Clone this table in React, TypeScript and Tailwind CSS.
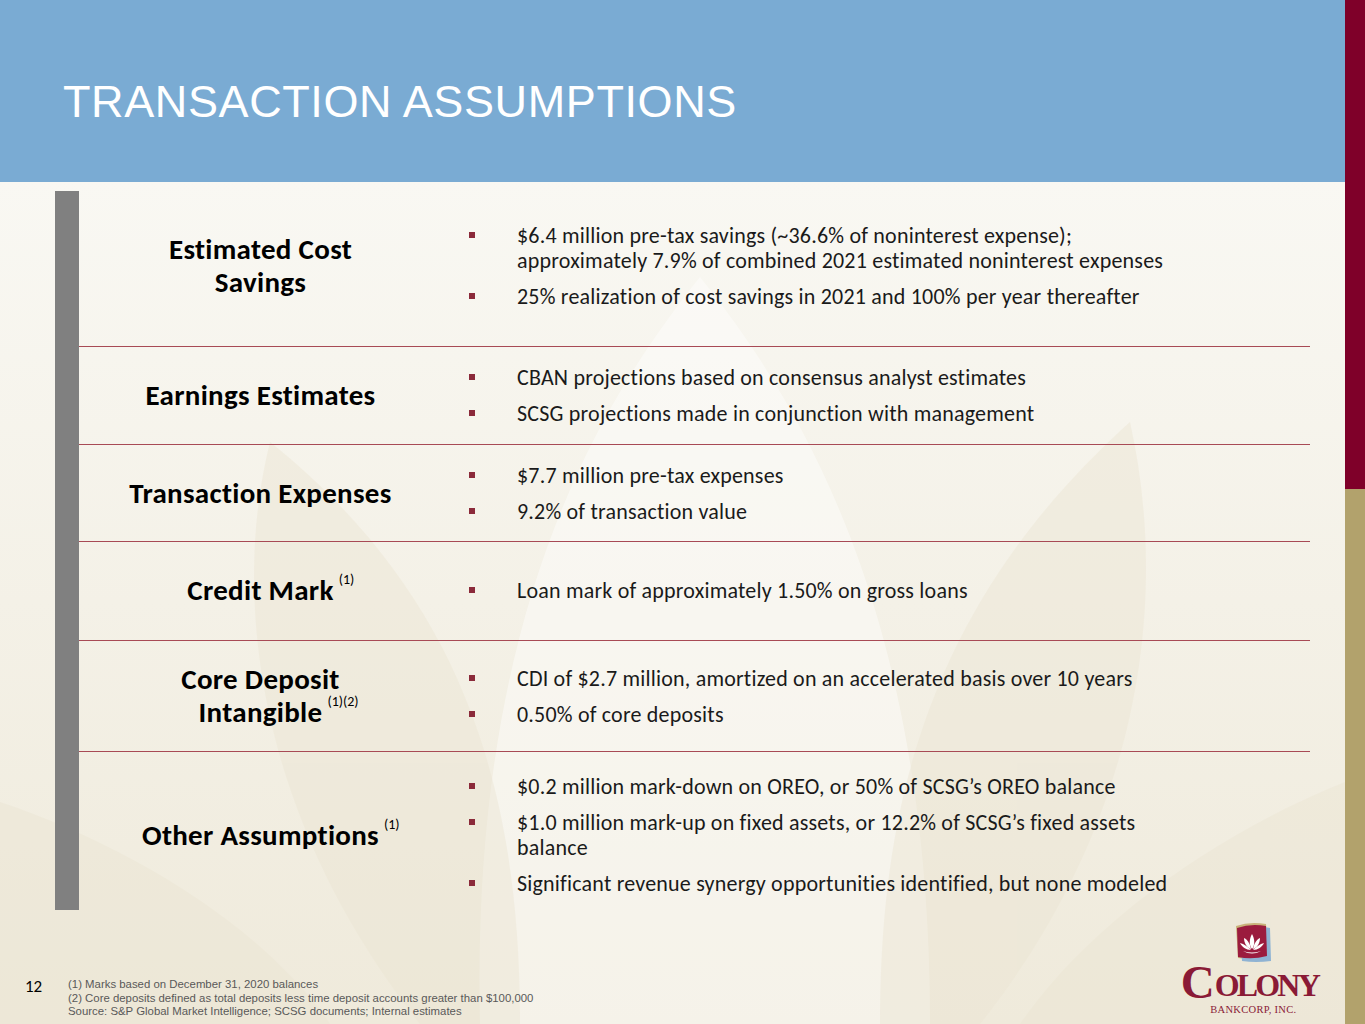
import React from "react";

const body = "font-['Carlito','Lato','Noto_Sans',sans-serif]";

type Row = {
  label: React.ReactNode;
  items: React.ReactNode[];
  h: string;
  pad?: string;
};

function Sup({ text }: { text: string }) {
  return (
    <span className="absolute left-full top-[-9px] ml-[5px] whitespace-nowrap text-[14px] font-normal tracking-normal">
      {text}
    </span>
  );
}

const rows: Row[] = [
  {
    label: (
      <>
        Estimated Cost
        <br />
        Savings
      </>
    ),
    items: [
      <>
        $6.4 million pre-tax savings (~36.6% of noninterest expense);
        <br />
        approximately 7.9% of combined 2021 estimated noninterest expenses
      </>,
      "25% realization of cost savings in 2021 and 100% per year thereafter",
    ],
    h: "h-[156px]",
    pad: "pb-[6px]",
  },
  {
    label: "Earnings Estimates",
    items: [
      "CBAN projections based on consensus analyst estimates",
      "SCSG projections made in conjunction with management",
    ],
    h: "h-[98px]",
  },
  {
    label: "Transaction Expenses",
    items: ["$7.7 million pre-tax expenses", "9.2% of transaction value"],
    h: "h-[97px]",
  },
  {
    label: (
      <span className="relative">
        Credit Mark
        <Sup text="(1)" />
      </span>
    ),
    items: ["Loan mark of approximately 1.50% on gross loans"],
    h: "h-[99px]",
    pad: "pb-[2px]",
  },
  {
    label: (
      <>
        Core Deposit
        <br />
        <span className="relative">
          Intangible
          <Sup text="(1)(2)" />
        </span>
      </>
    ),
    items: [
      "CDI of $2.7 million, amortized on an accelerated basis over 10 years",
      "0.50% of core deposits",
    ],
    h: "h-[111px]",
  },
  {
    label: (
      <span className="relative">
        Other Assumptions
        <Sup text="(1)" />
      </span>
    ),
    items: [
      "$0.2 million mark-down on OREO, or 50% of SCSG’s OREO balance",
      <>
        $1.0 million mark-up on fixed assets, or 12.2% of SCSG’s fixed assets
        <br />
        balance
      </>,
      "Significant revenue synergy opportunities identified, but none modeled",
    ],
    h: "h-[158px]",
    pad: "pt-[8px]",
  },
];

function Watermark() {
  return (
    <svg
      className="absolute inset-0 h-full w-full"
      viewBox="0 0 1345 842"
      preserveAspectRatio="none"
    >
      <g fill="#ffffff" opacity="0.4">
        <path d="M700 95 C 600 220, 470 430, 480 842 L 930 842 C 930 430, 800 220, 700 95 Z" />
      </g>
      <g fill="#ebe5d3" opacity="0.45">
        <path d="M270 260 C 230 420, 260 640, 420 842 L 520 842 C 520 620, 470 420, 270 260 Z" />
        <path d="M1130 240 C 1170 420, 1140 640, 980 842 L 880 842 C 880 620, 930 420, 1130 240 Z" />
        <path d="M0 620 C 120 660, 260 740, 330 842 L 0 842 Z" />
        <path d="M1345 600 C 1220 650, 1090 740, 1020 842 L 1345 842 Z" />
      </g>
    </svg>
  );
}

function Logo() {
  return (
    <div className="flex flex-col items-center">
      <svg width="40" height="40" viewBox="0 0 40 40" className="ml-[6px]">
        <path d="M4 4 Q 18 -1 34 2 L 36 34 Q 20 38 6 36 Z" fill="#c9b27a" />
        <path d="M8 7 Q 22 2 38 6 L 39 39 Q 24 41 10 39 Z" fill="#8fb3d3" />
        <path d="M5 6 Q 19 1 34 4 L 35 34 Q 20 38 6 35 Z" fill="#9b1b3e" />
        <g fill="#ffffff">
          <path d="M20 12 C 17 17, 17 23, 20 27 C 23 23, 23 17, 20 12 Z" />
          <path d="M12 16 C 12 21, 15 26, 19 27 C 18 22, 16 18, 12 16 Z" />
          <path d="M28 16 C 28 21, 25 26, 21 27 C 22 22, 24 18, 28 16 Z" />
          <path d="M8 21 C 10 25, 14 28, 19 28 C 16 25, 12 22, 8 21 Z" />
          <path d="M32 21 C 30 25, 26 28, 21 28 C 24 25, 28 22, 32 21 Z" />
          <path d="M11 29 Q 20 32 29 29 Q 20 34 11 29 Z" />
        </g>
      </svg>
      <div className="mt-[2px] flex items-end font-['Liberation_Serif',serif] font-bold text-[#8a1a36]">
        <span className="text-[47px] leading-[36px]">C</span>
        <span className="text-[32px] leading-[29px] tracking-[-2.8px]">OLONY</span>
      </div>
      <div className="ml-[8px] mt-[5px] font-['Liberation_Serif',serif] text-[10.5px] leading-none tracking-[0.3px] text-[#8a1a36]">
        BANKCORP, INC.
      </div>
    </div>
  );
}

export default function App() {
  return (
    <div className="flex h-[1024px] w-[1365px] overflow-hidden">
      <div className="flex w-[1345px] flex-col">
        {/* HEADER */}
        <div className="h-[182px] shrink-0 bg-[#7aabd3] pl-[63px] pt-[79px]">
          <h1 className="font-['Liberation_Sans',Arial,sans-serif] text-[45px] leading-[45px] tracking-[0.6px] text-white">
            TRANSACTION ASSUMPTIONS
          </h1>
        </div>

        {/* BODY */}
        <div className="relative flex-1 bg-gradient-to-b from-[#f9f8f3] to-[#efeadb]">
          <Watermark />

          <div className="relative flex pl-[55px] pt-[9px]">
            <div className="h-[719px] w-[24px] bg-[#808080]" />

            <div className={`w-[1231px] ${body}`}>
              {rows.map((row, i) => (
                <div
                  key={i}
                  className={`flex items-center ${row.h} ${row.pad ?? ""} ${
                    i < rows.length - 1 ? "border-b-[1.5px] border-[#a84a55]" : ""
                  }`}
                >
                  <div className="w-[363px] text-center text-[29px] font-bold leading-[33px] tracking-[0.3px] text-black">
                    {row.label}
                  </div>
                  <ul className="flex flex-col gap-[11px] text-[22px] leading-[25px] tracking-[0.2px] text-[#1a1a1a]">
                    {row.items.map((item, j) => (
                      <li key={j} className="flex">
                        <span className="ml-[27px] mt-[9px] h-[6px] w-[6px] shrink-0 bg-[#8b2a3a]" />
                        <span className="ml-[42px]">{item}</span>
                      </li>
                    ))}
                  </ul>
                </div>
              ))}
            </div>
          </div>

          {/* FOOTER */}
          <div className="relative mt-[12px] flex items-start justify-between pr-[27px]">
            <div className="flex items-start pl-[25px] pt-[56px]">
              <div className={`${body} w-[43px] text-[17px] leading-[17px] text-black`}>12</div>
              <div className="font-['Liberation_Sans',Arial,sans-serif] text-[11.4px] leading-[13.5px] text-[#595959]">
                <div>(1) Marks based on December 31, 2020 balances</div>
                <div>(2) Core deposits defined as total deposits less time deposit accounts greater than $100,000</div>
                <div>Source: S&amp;P Global Market Intelligence; SCSG documents; Internal estimates</div>
              </div>
            </div>
            <Logo />
          </div>
        </div>
      </div>

      {/* RIGHT EDGE */}
      <div className="flex w-[20px] flex-col">
        <div className="h-[489px] bg-[#7f0029]" />
        <div className="flex-1 bg-[#b2a26c]" />
      </div>
    </div>
  );
}
